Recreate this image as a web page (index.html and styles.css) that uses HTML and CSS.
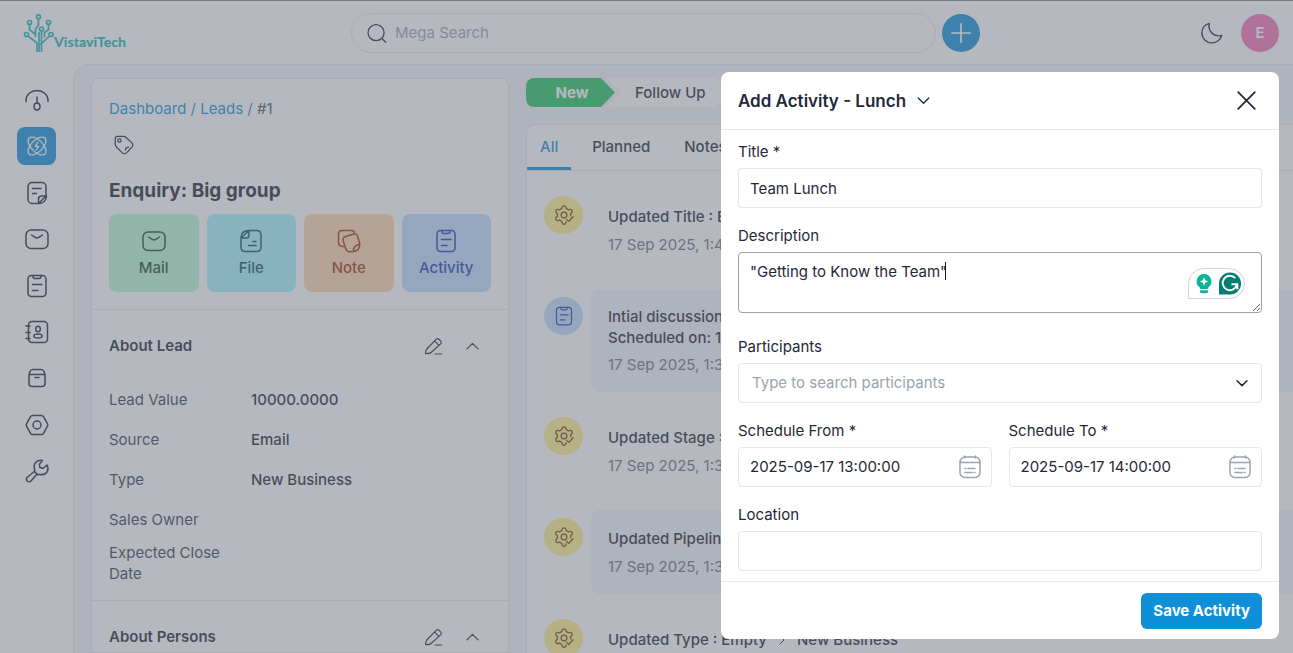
FILE: index.html
```html
<!DOCTYPE html>
<html lang="en">
<head>
<meta charset="utf-8">
<title>Enquiry: Big group</title>
<meta name="viewport" content="width=device-width, initial-scale=1">
<link rel="stylesheet" href="styles.css">
</head>
<body>
<svg class="sprite" aria-hidden="true">
  <symbol id="i-mail" viewBox="0 0 24 24"><rect x="1" y="3" width="22" height="18.500" rx="5"/><path d="M6.500 8c3 2 4 3 5.500 3s2.500-1 5.500-3"/></symbol>
  <symbol id="i-clip" viewBox="0 0 24 24"><rect x="3" y="1.500" width="18" height="21" rx="3.500"/><path d="M8 1.500v1a2 2 0 0 0 2 2h4a2 2 0 0 0 2-2v-1M7.500 10.500h9.500M7.500 16.500h5.500"/></symbol>
  <symbol id="i-gear" viewBox="0 0 24 24"><circle cx="12" cy="12" r="3.400"/><path d="M20.200 13L20 10.300C23.900 8.100 21.300 3.600 17.500 5.900L14.500 4.200C14.600-.2 9.400-.2 9.500 4.200L6.500 5.900C2.700 3.600.1 8.100 4 10.300V13.700C.1 15.900 2.700 20.400 6.500 18.100L9.500 19.800C9.400 24.200 14.600 24.200 14.500 19.800M15 17l2.800 2.600 5-5.500"/></symbol>
  <symbol id="i-pen" viewBox="0 0 24 24"><path d="M2 21c0-3 .3-4.500 1.500-5.800L15.300 3c1-1.200 2.500-1.200 3.700-.1l2 2c1.100 1.100 1.100 2.700 0 3.800L9.300 19.300C8 20.600 5 21 2 21zM13.500 5.200l5.300 5.400M14 21.500h8.500"/></symbol>
  <symbol id="i-up" viewBox="0 0 24 24"><path d="M5 15l7-7 7 7"/></symbol>
  <symbol id="i-down" viewBox="0 0 24 24"><path d="M3.500 8l8.500 8.500 8.500-8.500"/></symbol>
  <symbol id="i-cal" viewBox="0 0 24 24"><rect x="2" y="2" width="20" height="20.500" rx="5"/><path d="M2 7.500h20M6.500 1v2M17.500 1v2M7 13.500h1M10 13.500h7M7 17.500h7M16 17.500h1"/></symbol>
</svg>

<div class="app">
  <header class="topbar">
    <a class="logo" href="#" aria-label="VistaviTech home">
      <svg class="logo-mark" viewBox="0 0 30 38" aria-hidden="true">
        <g fill="none" stroke="#1fb5b5" stroke-width="1.700">
          <circle cx="15" cy="2.800" r="2"/><circle cx="6" cy="8.500" r="2"/><circle cx="25" cy="8.500" r="2"/><circle cx="18" cy="15" r="2"/><circle cx="3" cy="20.500" r="2"/><circle cx="27.500" cy="20.500" r="2"/>
          <path d="M15 5v6l-3 4v8M6 10.500v5l6 5M25 10.500v5l-4 3v5M18 17v21M4.500 22l9 7v9M26 22l-9.500 9M15.500 18v20"/>
        </g>
      </svg>
      <span class="logo-text">VistaviTech</span>
    </a>
    <div class="search-group">
      <label class="search">
        <svg class="ico" viewBox="0 0 24 24" aria-hidden="true"><circle cx="11.500" cy="11" r="9.200"/><path d="M18 17.500l4.500 4.500"/></svg>
        <input type="text" placeholder="Mega Search" aria-label="Mega Search">
      </label>
      <button class="round-btn" aria-label="Quick create"><svg class="ico" viewBox="0 0 24 24" aria-hidden="true"><path d="M12 1v22M1 12h22"/></svg></button>
    </div>
    <div class="user-group">
      <button class="plain" aria-label="Dark mode"><svg class="ico moon" viewBox="0 0 24 24" aria-hidden="true"><path d="M9 1.500C4 2.800 1 7 1 12c0 6 4.800 10.800 10.800 10.800 5.200 0 9.500-3.500 10.900-8.300C16 17 7 11.500 9 1.500z"/></svg></button>
      <button class="avatar">E</button>
    </div>
  </header>

  <div class="shell">
    <nav class="sidebar" aria-label="Main">
      <a href="#" aria-label="Dashboard"><svg class="ico" viewBox="0 0 24 24" aria-hidden="true"><path d="M1 13.500v-1C1 6.500 6 2.500 12 2.500s11 4 11 10v1M12 9v6"/><ellipse cx="12" cy="18.500" rx="3" ry="3.500"/></svg></a>
      <a href="#" class="active" aria-label="Leads"><svg class="ico" viewBox="0 0 24 24" aria-hidden="true"><ellipse cx="12" cy="12" rx="13.500" ry="7" transform="rotate(45 12 12)"/><ellipse cx="12" cy="12" rx="13.500" ry="7" transform="rotate(-45 12 12)"/><path d="M13 7.500l-3 5h4l-3 4"/></svg></a>
      <a href="#" aria-label="Quotes"><svg class="ico" viewBox="0 0 24 24" aria-hidden="true"><path d="M13.500 22.500H7a4 4 0 0 1-4-4v-13a4 4 0 0 1 4-4h10a4 4 0 0 1 4 4V15zM13.500 22.500V18a3 3 0 0 1 3-3h5M13.500 22.500c4.500 0 8-3 8-7.500M7.500 7.500h8.500M7.500 12.500h4"/></svg></a>
      <a href="#" aria-label="Mail"><svg class="ico" aria-hidden="true"><use href="#i-mail"/></svg></a>
      <a href="#" aria-label="Activities"><svg class="ico" aria-hidden="true"><use href="#i-clip"/></svg></a>
      <a href="#" aria-label="Contacts"><svg class="ico" viewBox="0 0 24 24" aria-hidden="true"><rect x="3.500" y="1.500" width="19" height="21" rx="3.500"/><path d="M1 6h4M1 12.500h4M1 18.500h4"/><ellipse cx="13" cy="9" rx="2.300" ry="2.800"/><ellipse cx="13" cy="16" rx="4.200" ry="2"/></svg></a>
      <a href="#" aria-label="Products"><svg class="ico" viewBox="0 0 24 24" aria-hidden="true"><path d="M4 8.500L5 5.500C5.500 4 6.500 3.500 8 3.500h8c1.500 0 2.500.5 3 2l1 3v9a3 3 0 0 1-3 3H7a3 3 0 0 1-3-3zM4 8.500h16M10 11.500h4"/></svg></a>
      <a href="#" aria-label="Settings"><svg class="ico" viewBox="0 0 24 24" aria-hidden="true"><path d="M7.500 2.500h9c.8 0 1.500.4 2 1.200l4 7.200c.4.700.4 1.500 0 2.200l-4 7.200c-.5.800-1.200 1.200-2 1.200h-9c-.8 0-1.500-.4-2-1.200l-4-7.200c-.4-.7-.4-1.500 0-2.200l4-7.200c.5-.8 1.200-1.200 2-1.200z"/><circle cx="12" cy="12" r="4"/></svg></a>
      <a href="#" aria-label="Configuration"><svg class="ico" viewBox="0 0 24 24" aria-hidden="true"><path d="M17.500 1.500C12 .5 8 4.500 9.500 10v2.500L2.500 18c-3 3 1 6.500 3.500 4l5.500-6.500H15c7 1 9.500-5 7-9.500L18 9.500 14.800 8.500 14.500 5z"/><path d="M9.500 12.500l3 3"/></svg></a>
    </nav>

    <main class="content">
      <section class="lead">
        <div class="lead-head">
          <nav class="crumbs" aria-label="Breadcrumb"><a href="#">Dashboard</a> <i>/</i> <a href="#">Leads</a> <i>/</i> <span>#1</span></nav>
          <button class="plain tag" aria-label="Tags"><svg class="ico" viewBox="0 0 24 24" aria-hidden="true"><path d="M1.500 4.500c0-1.500 1-3 2.500-3h7c1.500 0 2.500.5 3.500 1.500l7 6.500c1.500 1.500 1.500 3.500 0 5l-6.500 7c-1.500 1.500-3.500 1.500-5 0l-6.500-6.500c-1-1-2-2-2-3.500z"/><circle cx="6.500" cy="6.500" r="2"/><path d="M13.500 18l1-2.500 3-1"/></svg></button>
          <h1>Enquiry: Big group</h1>
          <div class="actions">
            <button class="act mail"><svg class="ico" aria-hidden="true"><use href="#i-mail"/></svg>Mail</button>
            <button class="act file"><svg class="ico" viewBox="0 0 24 24" aria-hidden="true"><path d="M10 1.500h7.500c3 0 4.500 1.500 4.500 4.500v12c0 3-1.500 4.500-4.500 4.500h-11C3.500 22.500 2 21 2 18V9zM10 1.500C5 1.500 2 4 2 9h5.500C9 9 10 8 10 6.500zM14 12.500h3M9.500 16.500H17"/></svg>File</button>
            <button class="act note"><svg class="ico" viewBox="0 0 24 24" aria-hidden="true"><path d="M6.500 17.500c-3 0-5-1-5-4V5c0-2 1.500-3.500 3.500-3.500h9c2 0 3.500 1 3.500 3M8.500 7.500l8.500-2.500c1.500-.5 3 .5 3.500 2l2.300 8c0 4-2.300 7-6.300 7.500l-4 .3c-2 0-3-1-3.500-2.500L6.200 12c-.6-2.300.3-4 2.300-4.500zM16.500 22.500c-.5-4.500 2-6.500 6.300-7.500"/></svg>Note</button>
            <button class="act activity"><svg class="ico" aria-hidden="true"><use href="#i-clip"/></svg>Activity</button>
          </div>
        </div>
        <div class="about">
          <div class="about-head"><h2>About Lead</h2>
            <button class="plain" aria-label="Edit lead"><svg class="ico" aria-hidden="true"><use href="#i-pen"/></svg></button>
            <button class="plain" aria-label="Collapse lead"><svg class="ico" aria-hidden="true"><use href="#i-up"/></svg></button>
          </div>
          <dl class="facts">
            <dt>Lead Value</dt><dd>10000.0000</dd>
            <dt>Source</dt><dd>Email</dd>
            <dt>Type</dt><dd>New Business</dd>
            <dt>Sales Owner</dt><dd></dd>
            <dt class="wrap">Expected Close Date</dt><dd></dd>
          </dl>
        </div>
        <div class="about">
          <div class="about-head"><h2>About Persons</h2>
            <button class="plain" aria-label="Edit persons"><svg class="ico" aria-hidden="true"><use href="#i-pen"/></svg></button>
            <button class="plain" aria-label="Collapse persons"><svg class="ico" aria-hidden="true"><use href="#i-up"/></svg></button>
          </div>
        </div>
      </section>

      <section class="feed">
        <div class="stages">
          <button class="stage current">New</button>
          <button class="stage">Follow Up</button>
        </div>
        <div class="panel">
          <div class="tabs">
            <button class="tab on">All</button><button class="tab">Planned</button><button class="tab">Notes</button><button class="tab">Calls</button><button class="tab">Meetings</button><button class="tab">Lunches</button><button class="tab">Files</button><button class="tab">Emails</button><button class="tab">Change Logs</button><button class="tab">Description</button>
          </div>
          <ul class="timeline">
            <li><span class="dot"><svg class="ico" aria-hidden="true"><use href="#i-gear"/></svg></span>
              <div class="entry"><p class="title">Updated Title : Empty</p><p class="date">17 Sep 2025, 1:41</p></div></li>
            <li class="planned"><span class="dot blue"><svg class="ico" aria-hidden="true"><use href="#i-clip"/></svg></span>
              <div class="entry shaded"><p>Intial discussion</p><p>Scheduled on: 17 Sep</p><p class="date">17 Sep 2025, 1:38</p></div></li>
            <li><span class="dot"><svg class="ico" aria-hidden="true"><use href="#i-gear"/></svg></span>
              <div class="entry"><p class="title">Updated Stage : Empty</p><p class="date">17 Sep 2025, 1:37</p></div></li>
            <li><span class="dot"><svg class="ico" aria-hidden="true"><use href="#i-gear"/></svg></span>
              <div class="entry shaded"><p class="title">Updated Pipeline : Empty</p><p class="date">17 Sep 2025, 1:37</p></div></li>
            <li><span class="dot"><svg class="ico" aria-hidden="true"><use href="#i-gear"/></svg></span>
              <div class="entry"><p class="title change"><span>Updated Type : Empty</span><svg class="ico arrow" viewBox="0 0 24 24" aria-hidden="true"><path d="M8 4l8 8-8 8"/></svg><span>New Business</span></p></div></li>
          </ul>
        </div>
      </section>
    </main>
  </div>
</div>

<div class="overlay">
  <form class="modal" role="dialog" aria-labelledby="dlg-title">
    <div class="modal-head">
      <button type="button" class="plain kind" id="dlg-title">Add Activity - Lunch<svg class="ico" aria-hidden="true"><use href="#i-down"/></svg></button>
      <button type="button" class="plain" aria-label="Close"><svg class="ico close" viewBox="0 0 24 24" aria-hidden="true"><path d="M2.500 2.500l19 19M21.500 2.500l-19 19"/></svg></button>
    </div>
    <div class="modal-body">
      <div class="field"><label for="title">Title *</label><input class="box thick" id="title" type="text" value="Team Lunch"></div>
      <div class="field area"><label for="desc">Description</label>
        <textarea class="box" id="desc">"Getting to Know the Team"</textarea>
        <span class="caret"></span>
        <span class="assist">
          <svg viewBox="0 0 20 24" aria-hidden="true"><path fill="#0ab39a" d="M10 0a9 9 0 0 0-5.500 16c.8.700 1 1.300 1 2h9c0-.7.2-1.300 1-2A9 9 0 0 0 10 0z"/><path fill="#fff" d="M10 4l1.500 3.500L15 9l-3.500 1.500L10 14l-1.500-3.500L5 9l3.500-1.500z"/><path fill="#0ab39a" d="M5 19.500h10v1.200c0 1.500-1 2.300-2.500 2.300h-5C6 23 5 22.200 5 20.700z"/></svg>
          <svg viewBox="0 0 24 24" aria-hidden="true"><path fill="#027e6f" d="M12 .5A11.500 11.500 0 1 1 12 23.500H.5V12A11.500 11.500 0 0 1 12 .5z"/><path fill="none" stroke="#fff" stroke-width="2" d="M17.500 6.500A7.500 7.500 0 1 0 19.200 13M13.500 12.800h6.200v5.200"/></svg>
        </span>
      </div>
      <div class="field"><label for="people">Participants</label>
        <div class="box combo"><input id="people" type="text" placeholder="Type to search participants"><svg class="ico" aria-hidden="true"><use href="#i-down"/></svg></div></div>
      <div class="pair">
        <div class="field"><label for="from">Schedule From *</label>
          <div class="box date-box"><input id="from" type="text" value="2025-09-17 13:00:00"><svg class="ico" aria-hidden="true"><use href="#i-cal"/></svg></div></div>
        <div class="field"><label for="to">Schedule To *</label>
          <div class="box date-box"><input id="to" type="text" value="2025-09-17 14:00:00"><svg class="ico" aria-hidden="true"><use href="#i-cal"/></svg></div></div>
      </div>
      <div class="field"><label for="place">Location</label><input class="box" id="place" type="text"></div>
    </div>
    <div class="modal-foot"><button type="submit" class="save">Save Activity</button></div>
  </form>
</div>
</body>
</html>
```
FILE: styles.css
```css
* { box-sizing: border-box; }
body { margin: 0; font-family: Inter, "Liberation Sans", sans-serif; font-size: 15px; line-height: 20px; color: #1f2937; background: #fff; overflow: hidden; }
h1, h2, p, ul, dl, dd { margin: 0; padding: 0; }
ul { list-style: none; }
a { text-decoration: none; color: inherit; }
button, input, textarea { font: inherit; color: inherit; }
button { border: 0; padding: 0; cursor: pointer; }
input { min-width: 0; }
.sprite { position: absolute; width: 0; height: 0; }
.ico { width: 24px; height: 24px; fill: none; stroke: currentColor; stroke-width: 1.5; stroke-linecap: round; stroke-linejoin: round; display: block; flex: none; overflow: visible; }
.plain { background: none; }

.app { height: 100vh; display: flex; flex-direction: column; }
.topbar { height: 64px; flex: none; display: flex; align-items: center; padding: 2px 14px 0 23px; }
.logo { width: 328px; display: flex; align-items: flex-end; }
.logo-mark { width: 31px; height: 38px; }
.logo-text { font-family: Lato, sans-serif; font-weight: 900; font-size: 14px; line-height: 20px; color: #1fb5b5; }
.search-group { flex: 1; max-width: 629px; display: flex; align-items: center; gap: 6px; }
.search { flex: 1; height: 40px; display: flex; align-items: center; gap: 8px; padding: 0 14px; border: 1px solid #e5e7eb; border-radius: 20px; }
.search .ico { width: 21px; height: 21px; }
.search input { flex: 1; border: 0; outline: 0; background: none; padding: 0; }
::placeholder { color: #9ca3af; opacity: 1; }
.round-btn, .avatar { width: 38px; height: 38px; border-radius: 50%; color: #fff; background: #0e90d9; display: grid; place-items: center; flex: none; }
.round-btn .ico { width: 20px; height: 20px; stroke-width: 2; }
.user-group { margin-left: auto; display: flex; align-items: center; gap: 18px; }
.moon { width: 22px; height: 22px; }
.avatar { background: #f472b6; font-weight: 600; }

.shell { flex: 1; min-height: 0; display: flex; }
.sidebar { width: 73px; height: 426px; flex: none; padding: 17px 17px 0; display: flex; flex-direction: column; justify-content: space-between; color: #1f2937; }
.sidebar a { height: 38px; display: grid; place-items: center; border-radius: 8px; }
.sidebar .active { background: #0e90d9; color: #fff; }
.sidebar .active .ico { width: 20px; height: 20px; }
.content { flex: 1; min-width: 0; display: flex; gap: 17px; padding: 13px 0 0 17px; background: #f3f4f6; border: solid #e5e7eb; border-width: 1px 0 0 1px; border-top-left-radius: 16px; overflow: hidden; }

.lead { width: 418px; flex: none; background: #fff; border: 1px solid #e5e7eb; border-radius: 8px 8px 0 0; align-self: stretch; }
.lead-head { padding: 18px 17px 17px; }
.crumbs { line-height: 24px; color: #4b5563; }
.crumbs a, .crumbs i { color: #0e90d9; font-style: normal; }
.tag { display: block; padding: 14px 5px; }
.tag .ico { width: 20px; height: 20px; }
h1 { font-size: 19px; line-height: 26px; font-weight: 700; padding-top: 9px; }
.actions { display: grid; grid-template-columns: repeat(4, 1fr); gap: 8px; padding-top: 10px; }
.act { height: 78px; border-radius: 8px; display: flex; flex-direction: column; align-items: center; justify-content: center; gap: 5px; font-weight: 500; }
.mail { background: #bbf7d0; color: #14532d; }
.file { background: #a5f3fc; color: #164e63; }
.note { background: #fed7aa; color: #9a3412; }
.activity { background: #bfdbfe; color: #1e40af; }
.about { border-top: 1px solid #e5e7eb; padding: 17px 17px 16px; }
.about-head { display: flex; align-items: center; gap: 20px; height: 38px; padding-right: 9px; }
h2 { flex: 1; font-size: 15px; line-height: 20px; font-weight: 600; }
.about-head .ico { width: 19px; height: 19px; }
.facts { display: grid; grid-template-columns: 142px 1fr; padding-top: 15px; }
.facts dt, .facts dd { line-height: 21px; padding: 9px 0 10px; }
.facts dt { color: #374151; }
.facts dd { font-weight: 500; }
.facts .wrap { padding: 2px 30px 0 0; }

.feed { flex: 1; min-width: 0; display: flex; flex-direction: column; gap: 17px; }
.stages { display: flex; }
.stage { height: 29px; font-size: 15px; font-weight: 500; padding: 0 24px 0 28px; background: #fff; clip-path: polygon(0 0, calc(100% - 14px) 0, 100% 50%, calc(100% - 14px) 100%, 0 100%, 14px 50%); margin-left: -8px; }
.stage.current { width: 89px; margin: 0; padding: 0 0 0 3px; color: #fff; background: #22c55e; font-weight: 700; border-radius: 8px 0 0 8px; clip-path: polygon(0 0, calc(100% - 14px) 0, 100% 50%, calc(100% - 14px) 100%, 0 100%); }
.panel { flex: 1; background: #fff; border: solid #e5e7eb; border-width: 1px 0 0 1px; border-top-left-radius: 8px; }
.tabs { display: flex; gap: 8px; overflow: hidden; border-bottom: 1px solid #e5e7eb; }
.tab { height: 45px; padding: 1px 13px 0; flex: none; background: none; font-weight: 500; border-bottom: 3px solid transparent; }
.tab.on { color: #0e90d9; border-color: #0e90d9; }
.timeline { padding: 17px 0 0 17px; display: flex; flex-direction: column; gap: 17px; }
.timeline li { display: flex; gap: 8px; }
.dot { width: 39px; height: 38px; margin-top: 8px; border-radius: 50%; display: grid; place-items: center; background: #fef08a; color: #713f12; flex: none; }
.dot .ico { width: 20px; height: 20px; }
.dot.blue { background: #bfdbfe; color: #1e40af; }
.entry { flex: 1; padding: 17px; border-radius: 8px 0 0 8px; font-weight: 500; }
.entry.shaded { background: #f3f4f6; }
.entry .title { line-height: 24px; }
.entry .date { margin-top: 6px; color: #6b7280; font-weight: 400; }
.planned .entry { line-height: 21px; }
.change { display: flex; align-items: center; gap: 9px; }
.arrow { width: 12px; height: 12px; stroke-width: 2; }

.overlay { position: fixed; inset: 0; padding: 14px; display: flex; justify-content: flex-end; align-items: flex-end; background: rgba(107, 114, 128, .5); border-top: 1px solid #7f7b7c; }
.modal { width: 558px; max-width: 100%; background: #fff; border-radius: 8px; }
.modal-head { display: flex; align-items: center; justify-content: space-between; height: 58px; padding: 0 22px 0 17px; border-bottom: 1px solid #e5e7eb; }
.kind { display: flex; align-items: center; gap: 10px; font-size: 17px; font-weight: 600; }
.kind .ico { width: 15px; height: 15px; stroke-width: 2; }
.close { width: 21px; height: 21px; stroke-width: 2; }
.modal-body { padding: 12px 17px 10px; display: flex; flex-direction: column; gap: 18px; }
.field { display: flex; flex-direction: column; gap: 6px; position: relative; }
.box { width: 100%; height: 40px; padding: 0 11px; border: 1px solid #e5e7eb; border-radius: 4px; background: #fff; outline: 0; }
.thick { box-shadow: 0 0 1px #e5e7eb; }
.area { padding-bottom: 6px; }
textarea.box { height: 61px; padding: 9px 11px; border-color: #9ca3af; resize: vertical; display: block; }
.caret { position: absolute; left: 207px; top: 36px; width: 1px; height: 18px; background: #111827; }
.assist { position: absolute; right: 17px; top: 42px; height: 31px; padding: 0 2px 0 6px; display: flex; align-items: center; gap: 5px; background: #fff; border: 1px solid #cfd2e0; border-radius: 16px 16px 16px 0; }
.assist svg { width: 24px; height: 23px; }
.assist svg:first-child { width: 18px; height: 20px; }
.combo, .date-box { display: flex; align-items: center; }
.combo input, .date-box input { flex: 1; border: 0; outline: 0; padding: 0; background: none; }
.combo { padding: 0 12px 0 13px; }
.combo .ico { width: 14px; height: 14px; stroke-width: 2.5; }
.date-box { padding-right: 9px; }
.date-box .ico { width: 24px; height: 24px; color: #9ca3af; }
.pair { display: grid; grid-template-columns: repeat(2, minmax(0, 1fr)); gap: 17px; }
.modal-foot { display: flex; justify-content: flex-end; padding: 11px 17px 10px; border-top: 1px solid #e5e7eb; }
.save { height: 36px; padding: 0 12px; border-radius: 6px; background: #0e90d9; color: #fff; font-weight: 700; }
```
